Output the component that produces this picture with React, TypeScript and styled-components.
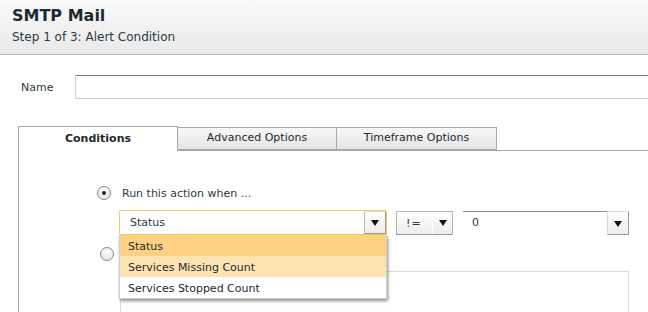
import React from "react";
import styled, { createGlobalStyle } from "styled-components";

const Global = createGlobalStyle`
  html, body { margin: 0; padding: 0; background: #fff; }
  body { font-family: "DejaVu Sans", Verdana, sans-serif; color: #2b3a42; overflow: hidden; }
  * { box-sizing: border-box; }
`;

const Page = styled.div`
  width: 648px;
  height: 312px;
  overflow: hidden;
  display: flex;
  flex-direction: column;
  & > * { flex-shrink: 0; }
`;

const Header = styled.div`
  height: 55px;
  background: linear-gradient(#fafafa, #e9e9e9);
  border-bottom: 1px solid #b9b9b9;
  padding: 6px 12px 0;
  display: flex;
  flex-direction: column;
  gap: 5px;
`;

const Title = styled.div`
  font-size: 16px;
  font-weight: bold;
  color: #1e2a30;
`;

const Subtitle = styled.div`
  font-size: 12px;
  color: #2b3a42;
`;

const NameRow = styled.div`
  display: flex;
  align-items: center;
  margin: 20px 0 0 21px;
  gap: 21px;
`;

const Label = styled.label`
  font-size: 11px;
  width: 33px;
`;

const NameInput = styled.div`
  flex: 1;
  height: 24px;
  border: 1px solid #cfcfcf;
  border-top-color: #7a7a7a;
  border-right: none;
`;

const Tabs = styled.div`
  margin: 28px 0 0 18px;
  display: flex;
  align-items: flex-end;
  border-bottom: 1px solid #a3abab;
  height: 24px;
`;

const Tab = styled.div<{ $active?: boolean; $w: number }>`
  width: ${(p) => p.$w}px;
  height: ${(p) => (p.$active ? 25 : 23)}px;
  margin-bottom: ${(p) => (p.$active ? -1 : 0)}px;
  border: 1px solid #a3abab;
  border-bottom: ${(p) => (p.$active ? "none" : "1px solid #a3abab")};
  border-left: ${(p) => (p.$active ? "1px solid #a3abab" : "none")};
  background: ${(p) => (p.$active ? "#fff" : "linear-gradient(#f8f8f8, #e4e4e4)")};
  font-size: 11px;
  font-weight: ${(p) => (p.$active ? "bold" : "normal")};
  color: #1e2a30;
  display: flex;
  justify-content: center;
  padding-top: ${(p) => (p.$active ? 5 : 3)}px;
  position: relative;
  z-index: 1;
`;

const Panel = styled.div`
  flex: 1 0 auto;
  margin-left: 18px;
  border-left: 1px solid #a3abab;
  padding: 34px 0 0 78px;
  position: relative;
`;

const RadioRow = styled.div`
  display: flex;
  align-items: center;
  gap: 11px;
  font-size: 11px;
  height: 16px;
`;

const Radio = styled.span<{ $checked?: boolean }>`
  width: 14px;
  height: 14px;
  border-radius: 50%;
  border: 1px solid #8a8a8a;
  background: radial-gradient(circle at 50% 35%, #ffffff, #dedede);
  display: inline-flex;
  align-items: center;
  justify-content: center;
  &::after {
    content: "";
    width: 4px;
    height: 4px;
    border-radius: 50%;
    background: ${(p) => (p.$checked ? "#222" : "transparent")};
  }
`;

const Controls = styled.div`
  display: flex;
  align-items: flex-start;
  margin: 9px 0 0 22px;
  gap: 9px;
`;

const Combo = styled.div`
  width: 268px;
  position: relative;
`;

const ComboBox = styled.div`
  height: 25px;
  border: 1px solid #fbc664;
  border-radius: 2px;
  display: flex;
  align-items: stretch;
  background: #fff;
`;

const ComboText = styled.div`
  flex: 1;
  font-size: 11px;
  padding: 5px 0 0 10px;
`;

const ArrowBtn = styled.div`
  width: 22px;
  border-left: 1px solid #bcbcbc;
  border-right: 1px solid #9a9a9a;
  border-bottom: 1px solid #9a9a9a;
  border-top: 1px solid #e0e0e0;
  background: linear-gradient(#ffffff, #ececec);
  display: flex;
  align-items: center;
  justify-content: center;
  &::after {
    content: "";
    border-left: 4px solid transparent;
    border-right: 4px solid transparent;
    border-top: 6px solid #111;
    margin-top: 1px;
  }
`;

const List = styled.div`
  position: absolute;
  top: 25px;
  left: 0;
  width: 268px;
  background: #fff;
  box-shadow: 1px 2px 3px rgba(0, 0, 0, 0.45);
  border: 1px solid #cfcfcf;
  border-top: none;
  z-index: 3;
`;

const Item = styled.div<{ $bg: string }>`
  height: 21px;
  font-size: 11px;
  padding: 5px 0 0 8px;
  background: ${(p) => p.$bg};
  color: #1e2a30;
`;

const OpSelect = styled.div`
  width: 57px;
  height: 24px;
  margin-top: 1px;
  border: 1px solid #b5b5b5;
  border-bottom-color: #9a9a9a;
  background: linear-gradient(#ffffff, #ececec);
  display: flex;
  font-size: 11px;
`;

const OpText = styled.div`
  width: 36px;
  border-right: 1px solid #fff;
  padding: 5px 0 0 9px;
  letter-spacing: 1px;
`;

const OpArrow = styled.div`
  flex: 1;
  display: flex;
  align-items: center;
  justify-content: center;
  &::after {
    content: "";
    border-left: 4px solid transparent;
    border-right: 4px solid transparent;
    border-top: 6px solid #111;
  }
`;

const ValueField = styled.div`
  display: flex;
  margin-left: 1px;
  height: 24px;
  margin-top: 1px;
`;

const ValueInput = styled.div`
  width: 144px;
  border-top: 1px solid #8a8a8a;
  font-size: 11px;
  padding: 4px 0 0 9px;
`;

const ValueArrow = styled(ArrowBtn)`
  border-top: 1px solid #e0e0e0;
  border-left: 1px solid #d8d8d8;
`;

const SecondRow = styled.div`
  margin: 12px 0 0 3px;
  display: flex;
`;

const SubBox = styled.div`
  margin: 10px 0 0 23px;
  width: 509px;
  height: 60px;
  border: 1px solid #dcdcdc;
`;

export default function App() {
  return (
    <Page>
      <Global />
      <Header>
        <Title>SMTP Mail</Title>
        <Subtitle>Step 1 of 3: Alert Condition</Subtitle>
      </Header>
      <NameRow>
        <Label>Name</Label>
        <NameInput />
      </NameRow>
      <Tabs>
        <Tab $active $w={160}>Conditions</Tab>
        <Tab $w={159}>Advanced Options</Tab>
        <Tab $w={160}>Timeframe Options</Tab>
      </Tabs>
      <Panel>
        <RadioRow>
          <Radio $checked />
          <span>Run this action when ...</span>
        </RadioRow>
        <Controls>
          <Combo>
            <ComboBox>
              <ComboText>Status</ComboText>
              <ArrowBtn />
            </ComboBox>
            <List>
              <Item $bg="#fdd182">Status</Item>
              <Item $bg="#fde3b1">Services Missing Count</Item>
              <Item $bg="#ffffff">Services Stopped Count</Item>
            </List>
          </Combo>
          <OpSelect>
            <OpText>!=</OpText>
            <OpArrow />
          </OpSelect>
          <ValueField>
            <ValueInput>0</ValueInput>
            <ValueArrow />
          </ValueField>
        </Controls>
        <SecondRow>
          <Radio />
        </SecondRow>
        <SubBox />
      </Panel>
    </Page>
  );
}
